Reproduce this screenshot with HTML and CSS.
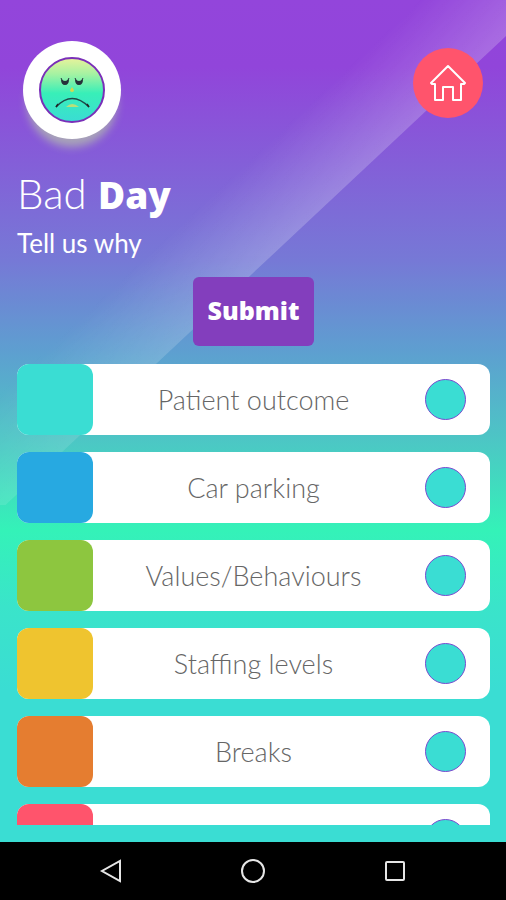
FILE: index.html
```html
<!DOCTYPE html>
<html lang="en">
<head>
<meta charset="utf-8">
<meta name="viewport" content="width=device-width, initial-scale=1">
<title>Bad Day</title>
<link rel="stylesheet" href="styles.css">
</head>
<body>
<div class="screen">
  <svg class="beam" viewBox="0 0 506 506" preserveAspectRatio="none" aria-hidden="true">
    <defs>
      <linearGradient id="beam" gradientUnits="userSpaceOnUse" x1="196" y1="210" x2="257" y2="275">
        <stop offset="0" stop-color="#fff" stop-opacity="0"/>
        <stop offset="1" stop-color="#fff" stop-opacity=".22"/>
      </linearGradient>
    </defs>
    <path d="M0 0H506V36L0 511Z" fill="url(#beam)"/>
  </svg>
  <main class="app">
    <header class="top">
      <div class="mood">
        <svg viewBox="0 0 68 68" width="68" height="68" role="img" aria-label="Sad face">
          <defs>
            <linearGradient id="face" x1="0" y1="0" x2="0" y2="1">
              <stop offset="0" stop-color="#e9f29a"/>
              <stop offset=".25" stop-color="#a5f2a2"/>
              <stop offset=".55" stop-color="#38efb8"/>
              <stop offset="1" stop-color="#3adcd4"/>
            </linearGradient>
          </defs>
          <circle cx="34" cy="34" r="32" fill="url(#face)" stroke="#7a2fb8" stroke-width="2"/>
          <path d="M23 23Q27 27 31 23Q31 29 27 29Q23 29 23 23ZM37 23Q41 27 45 23Q45 29 41 29Q37 29 37 23Z" fill="#26303a"/>
          <path d="M23 22l2 4M31 22l-2 4M37 22l2 4M45 22l-2 4" stroke="#26303a" stroke-width="1"/>
          <path d="M34 31l2 3q0 2-2 2t-2-2z" fill="#d6d84e"/>
          <path d="M18 51Q34 34 51 51" fill="none" stroke="#1f4a4a" stroke-width="1.3"/>
          <path d="M18 51l2-3M51 51l-2-3" stroke="#222" stroke-width="1.5"/>
          <path d="M28 51Q34 45 41 51Z" fill="#b8e07a"/>
        </svg>
      </div>
      <a class="home" href="#" aria-label="Home">
        <svg viewBox="0 0 40 40" width="40" height="40" aria-hidden="true">
          <path d="M20 3L3 20L4 21H7V37H15V24H25V37H33V21H36L37 20Z" fill="none" stroke="#fff" stroke-width="2" stroke-linejoin="round"/>
        </svg>
      </a>
    </header>
    <h1 class="title">Bad <strong>Day</strong></h1>
    <p class="subtitle">Tell us why</p>
    <button class="submit" type="button">Submit</button>
    <ul class="reasons">
      <li><label class="reason"><span class="swatch teal"></span><span class="name">Patient outcome</span><input class="tick" type="checkbox"></label></li>
      <li><label class="reason"><span class="swatch blue"></span><span class="name">Car parking</span><input class="tick" type="checkbox"></label></li>
      <li><label class="reason"><span class="swatch green"></span><span class="name">Values/Behaviours</span><input class="tick" type="checkbox"></label></li>
      <li><label class="reason"><span class="swatch yellow"></span><span class="name">Staffing levels</span><input class="tick" type="checkbox"></label></li>
      <li><label class="reason"><span class="swatch orange"></span><span class="name">Breaks</span><input class="tick" type="checkbox"></label></li>
      <li><label class="reason"><span class="swatch red"></span><span class="name"></span><input class="tick" type="checkbox" aria-label="Other"></label></li>
    </ul>
  </main>
</div>
<nav class="system" aria-label="System">
  <button class="key" type="button" aria-label="Back"><svg viewBox="0 0 24 24" width="24" height="24"><path d="M21 2V22L3 12Z"/></svg></button>
  <button class="key" type="button" aria-label="Home screen"><svg viewBox="0 0 24 24" width="24" height="24"><circle cx="12" cy="12" r="11"/></svg></button>
  <button class="key" type="button" aria-label="Recent apps"><svg viewBox="0 0 24 24" width="24" height="24"><rect x="3" y="3" width="18" height="18" rx="1"/></svg></button>
</nav>
</body>
</html>
```
FILE: styles.css
```css
* { box-sizing: border-box; }

body {
  margin: 0;
  height: 100vh;
  display: flex;
  flex-direction: column;
  font-family: Lato, "Liberation Sans", sans-serif;
  font-weight: 300;
  color: #fff;
  background: #000;
}

.screen {
  position: relative;
  flex: 1;
  min-height: 0;
  background: linear-gradient(#9345db 0%, #9145da 8%, #7679d6 31%, #5da0d0 42%, #4bc9c4 53%, #34f2b8 63%, #3ae4ca 72%, #3addd3 82%);
}

.beam {
  position: absolute;
  top: 0;
  left: 0;
  width: 100%;
  height: 60%;
  mask-image: linear-gradient(#000 50%, rgb(0 0 0 / 50%) 90%);
}

.app {
  position: relative;
  height: 100%;
  display: flex;
  flex-direction: column;
  padding: 41px 16px 17px 17px;
}

.top {
  display: flex;
  justify-content: space-between;
  align-items: flex-start;
  padding: 0 7px 0 6px;
}

.mood {
  display: grid;
  place-items: center;
  width: 98px;
  height: 98px;
  border-radius: 50%;
  background: #fff;
  box-shadow: 0 12px 8px -4px #a9a5b8;
}

.home {
  display: grid;
  place-items: center;
  width: 70px;
  height: 70px;
  margin-top: 7px;
  border-radius: 50%;
  background: #ff546c;
}

.title {
  margin: 28px 0 0;
  font-size: 42px;
  line-height: 52px;
  font-weight: 300;
}

.title strong {
  font-family: "Open Sans", sans-serif;
  font-weight: 800;
  font-size: 37px;
  line-height: 1;
}

.subtitle {
  margin: 8px 0 0;
  font-size: 26px;
  line-height: 32px;
  font-weight: 400;
}

.submit {
  align-self: center;
  margin: 18px 0;
  padding: 0 15px 4px;
  height: 69px;
  border: 0;
  border-radius: 6px;
  background: #833ebd;
  color: #fff;
  font: 800 25px/32px "Open Sans", sans-serif;
}

.reasons {
  flex: 1;
  min-height: 0;
  margin: 0;
  padding: 0;
  list-style: none;
  display: flex;
  flex-direction: column;
  gap: 17px;
  overflow-y: auto;
  scrollbar-width: none;
}

.reason {
  display: grid;
  grid-template-columns: 76px 1fr 76px;
  align-items: center;
  height: 71px;
  border-radius: 12px;
  background: #fff;
  color: #666;
  font-size: 27px;
}

.name { text-align: center; }

.swatch { height: 100%; border-radius: 12px; }
.teal { background: #3addd3; }
.blue { background: #27a9e1; }
.green { background: #8dc63f; }
.yellow { background: #efc42f; }
.orange { background: #e57d30; }
.red { background: #ff546c; }

.tick {
  appearance: none;
  width: 41px;
  height: 41px;
  margin: 0 0 0 11px;
  border: 1px solid #7a4ad0;
  border-radius: 50%;
  background: #3addd3;
}

.tick:checked { background: #833ebd; }

.system {
  display: flex;
  justify-content: center;
  gap: 94px;
  height: 58px;
  background: #000;
}

.key {
  display: grid;
  place-items: center;
  width: 48px;
  padding: 0;
  border: 0;
  background: none;
}

.key svg { fill: none; stroke: #e6e6e6; stroke-width: 2; overflow: visible; }
```
